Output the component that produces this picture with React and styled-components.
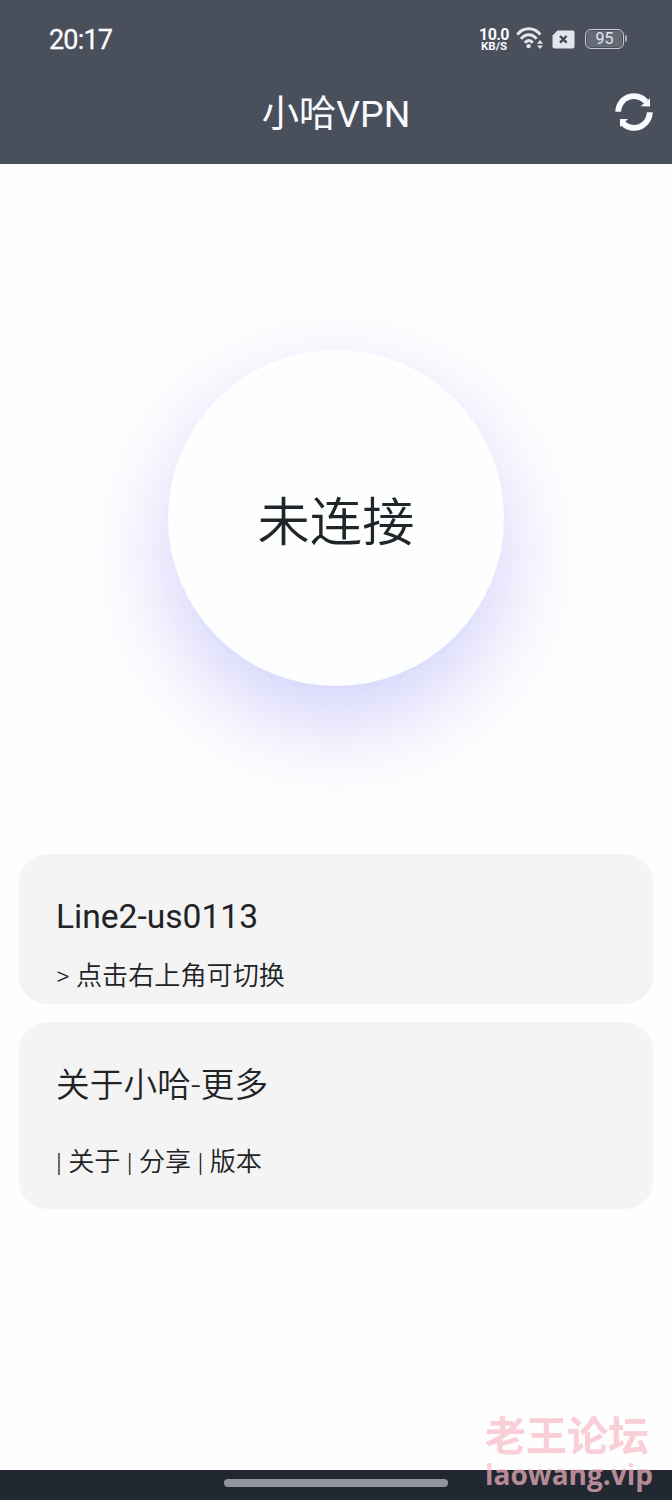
import React from 'react';
import styled, { createGlobalStyle } from 'styled-components';

export default function App() {
  return (
    <>
      <GlobalStyle />
      <Screen>
        <Header>
          <StatusBar>
            <Clock>20:17</Clock>
            <StatusIcons>
              <NetSpeed>
                <SpeedValue>10.0</SpeedValue>
                <SpeedUnit>KB/S</SpeedUnit>
              </NetSpeed>
              <WifiIcon />
              <SimIcon />
              <Battery>95</Battery>
            </StatusIcons>
          </StatusBar>
          <TitleBar>
            <div />
            <Title>小哈VPN</Title>
            <RefreshButton aria-label="refresh">
              <RefreshIcon />
            </RefreshButton>
          </TitleBar>
        </Header>
        <Main>
          <ConnectButton>未连接</ConnectButton>
          <Card height={150}>
            <CardTitle>Line2-us0113</CardTitle>
            <CardText gap={20}>&gt; 点击右上角可切换</CardText>
          </Card>
          <Card height={187}>
            <CardTitle light>关于小哈-更多</CardTitle>
            <CardText gap={37}>| 关于 | 分享 | 版本</CardText>
          </Card>
        </Main>
        <NavBar>
          <NavHandle />
        </NavBar>
        <Watermark>
          <WatermarkName>老王论坛</WatermarkName>
          <WatermarkSite>laowang.vip</WatermarkSite>
        </Watermark>
      </Screen>
    </>
  );
}

function WifiIcon() {
  return (
    <WifiSvg viewBox="0 0 28 26" fill="none" stroke="#e4e6ee" strokeWidth="3">
      <path d="M1.3 8.6 C7.6 0.9 18 0.9 24.3 8.6" />
      <path d="M5 12.9 C9.2 7.2 16.4 7.2 20.6 12.9" />
      <path d="M8.9 16.9 C11 13.6 14.6 13.6 16.7 16.9" />
      <circle cx="12.6" cy="20.2" r="2.1" fill="#e4e6ee" stroke="none" />
      <path d="M21 17.8 L24 14 L27 17.8 Z M21 19.4 L24 23 L27 19.4 Z" fill="#e4e6ee" stroke="none" />
    </WifiSvg>
  );
}

function SimIcon() {
  return (
    <SimSvg viewBox="0 0 23 19">
      <path d="M5.5 0.5 H20.5 Q22.5 0.5 22.5 2.5 V16.5 Q22.5 18.5 20.5 18.5 H2.5 Q0.5 18.5 0.5 16.5 V5.5 Z" fill="#e4e4ec" />
      <path d="M8 6 L14.6 12.6 M14.6 6 L8 12.6" stroke="#42464f" strokeWidth="2.4" />
    </SimSvg>
  );
}

function RefreshIcon() {
  return (
    <svg width="38" height="38" viewBox="0 0 38 38" fill="none">
      <path d="M3.2 18.8 A15.8 15.8 0 0 1 31 8.6" stroke="#f8faff" strokeWidth="5.8" />
      <path d="M35 5.2 V13.4 L25.6 13.2 Z" fill="#f8faff" />
      <path d="M34.8 19.2 A15.8 15.8 0 0 1 7 29.4" stroke="#f8faff" strokeWidth="5.8" />
      <path d="M5 34 V26 H13 Z" fill="#f8faff" />
    </svg>
  );
}

const GlobalStyle = createGlobalStyle`
  * {
    box-sizing: border-box;
  }

  body {
    margin: 0;
    background: #fefefe;
    font-family: Roboto, 'Noto Sans CJK SC', sans-serif;
  }
`;

const Screen = styled.div`
  position: relative;
  display: flex;
  flex-direction: column;
  width: 672px;
  height: 1500px;
  overflow: hidden;
  background: #fefefe;
`;

const Header = styled.header`
  height: 164px;
  background: #4a505b;
  color: #f8faff;
`;

const StatusBar = styled.div`
  display: flex;
  justify-content: space-between;
  align-items: center;
  height: 78px;
  padding: 0 48px 0 49px;
`;

const Clock = styled.span`
  padding-top: 1px;
  font-size: 27px;
  font-weight: 400;
  letter-spacing: -0.8px;
  -webkit-text-stroke: 0.3px currentColor;
`;

const StatusIcons = styled.div`
  display: flex;
  align-items: center;
`;

const NetSpeed = styled.div`
  display: flex;
  flex-direction: column;
  align-items: center;
  width: 30px;
  margin-right: 7px;
  padding-top: 1px;
  font-weight: 700;
  white-space: nowrap;
`;

const SpeedValue = styled.span`
  font-size: 16px;
  letter-spacing: -0.6px;
  line-height: 13px;
`;

const SpeedUnit = styled.span`
  font-size: 11.5px;
  line-height: 11px;
`;

const WifiSvg = styled.svg`
  width: 28px;
  height: 26px;
  margin-right: 8px;
`;

const SimSvg = styled.svg`
  width: 23px;
  height: 19px;
  margin-right: 10px;
`;

const Battery = styled.div`
  position: relative;
  width: 39px;
  height: 20px;
  border: 1.5px solid #c6c9d3;
  border-radius: 6px;
  background: #656a77;
  box-shadow: inset 0 0 0 1px #4a505b;
  color: #e4e6ee;
  font-size: 16px;
  line-height: 18px;
  text-align: center;

  &::after {
    content: '';
    position: absolute;
    top: 5px;
    right: -4px;
    width: 2px;
    height: 7px;
    border-radius: 0 2px 2px 0;
    background: #a9adb8;
  }
`;

const TitleBar = styled.div`
  display: grid;
  grid-template-columns: 1fr auto 1fr;
  align-items: center;
  height: 68px;
  padding: 0 19px;
`;

const Title = styled.h1`
  margin: 0;
  padding-top: 3px;
  font-size: 37.33px;
  font-weight: 400;
  line-height: 44px;
`;

const RefreshButton = styled.button`
  justify-self: end;
  display: flex;
  padding: 0;
  border: 0;
  background: none;
`;

const Main = styled.main`
  flex: 1;
  display: flex;
  flex-direction: column;
  align-items: center;
  padding: 186px 19px 0;
`;

const ConnectButton = styled.button`
  width: 336px;
  height: 336px;
  margin-bottom: 168px;
  padding: 0;
  border: 0;
  border-radius: 50%;
  background: #fdfffe;
  box-shadow: 0 35px 93px rgba(88, 84, 245, 0.28);
  color: #212429;
  font-family: inherit;
  font-size: 52.27px;
  font-weight: 350;
`;

const Card = styled.section`
  width: 100%;
  height: ${(p) => p.height}px;
  margin-bottom: 18px;
  padding: 43px 37px 0;
  border-radius: 28px;
  background: #f4f4f5;
  color: #212325;
`;

const CardTitle = styled.h2`
  margin: 0;
  padding-top: ${(p) => (p.light ? '1px' : '0')};
  font-size: 33.6px;
  font-weight: ${(p) => (p.light ? 350 : 400)};
  letter-spacing: ${(p) => (p.light ? '0.15px' : 'normal')};
  line-height: 40px;
`;

const CardText = styled.p`
  margin: ${(p) => p.gap}px 0 0;
  font-size: 26.13px;
  font-weight: 350;
  line-height: 38px;
`;

const NavBar = styled.footer`
  display: flex;
  justify-content: center;
  height: 30px;
  padding-top: 9px;
  background: #222831;
`;

const NavHandle = styled.div`
  width: 224px;
  height: 8px;
  border-radius: 4px;
  background: #9294a0;
`;

const Watermark = styled.div`
  position: absolute;
  right: 19px;
  bottom: 9px;
  display: flex;
  flex-direction: column;
  color: rgba(248, 185, 196, 0.7);
  font-weight: 700;
  white-space: nowrap;
`;

const WatermarkName = styled.span`
  font-family: 'Noto Sans CJK SC', sans-serif;
  font-size: 41px;
  line-height: 48px;
`;

const WatermarkSite = styled.span`
  font-family: 'Open Sans', 'Noto Sans', sans-serif;
  font-size: 28px;
  line-height: 34px;
`;
